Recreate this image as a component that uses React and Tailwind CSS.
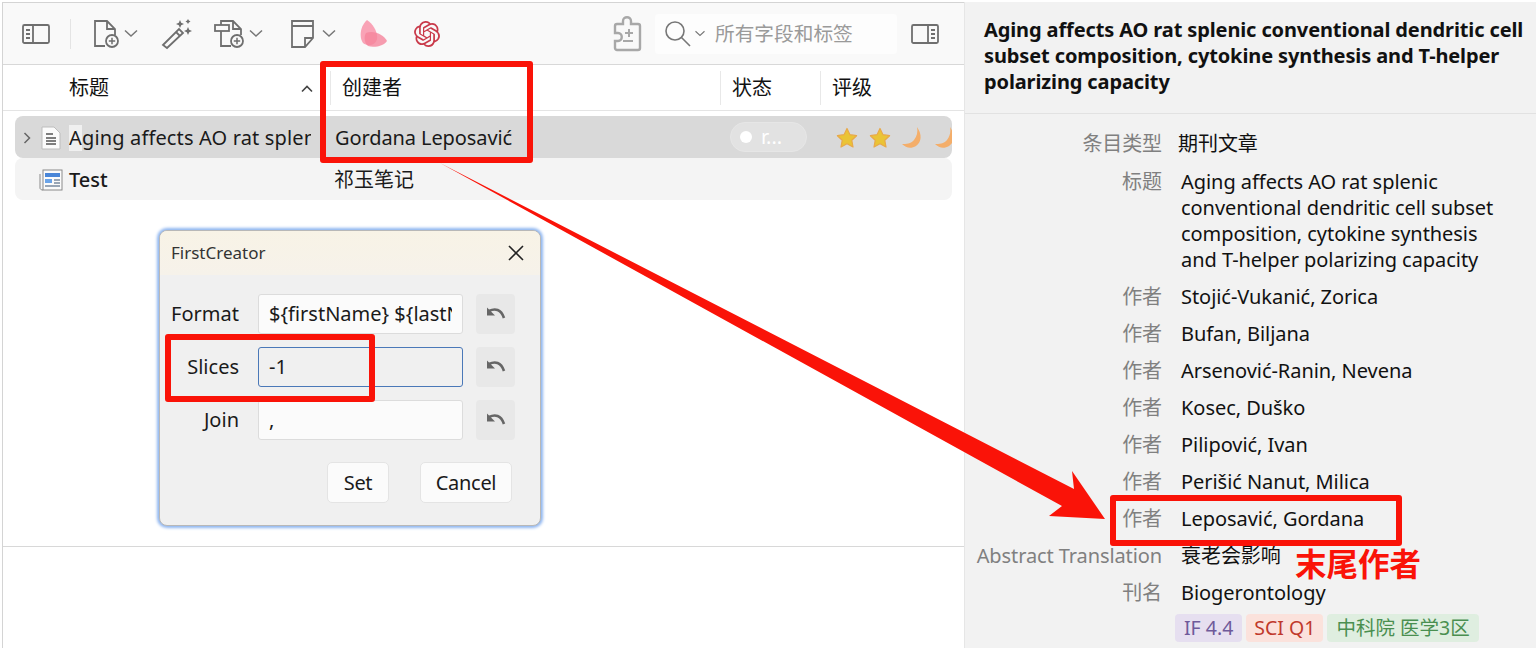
import React from "react";
import { SiOpenai } from "react-icons/si";

const FONT = "[font-family:'Noto_Sans','Noto_Sans_CJK_SC',sans-serif]";

const Chev = ({ className = "" }) => (
  <svg width="14" height="9" viewBox="0 0 14 9" className={className} fill="none" stroke="#777" strokeWidth="1.5"><path d="M1 1.5 7 7 13 1.5" /></svg>
);

const Plus = ({ cx, cy }) => (
  <g>
    <circle cx={cx} cy={cy} r="6" fill="#f9f9f9" stroke="#6f6f6f" strokeWidth="1.8" />
    <path d={`M${cx - 3.2} ${cy}h6.4M${cx} ${cy - 3.2}v6.4`} stroke="#6f6f6f" strokeWidth="1.5" />
  </g>
);

const PaneIcon = ({ flip }) => (
  <svg width="28" height="22" viewBox="0 0 28 22" fill="none" stroke="#6f6f6f" strokeWidth="1.8">
    <rect x="1" y="2" width="26" height="18" rx="1.5" />
    {flip ? (
      <path d="M17 2v18M20 7h4M20 11h4M20 15h4" />
    ) : (
      <path d="M11 2v18M4 7h4M4 11h4M4 15h4" />
    )}
  </svg>
);

const NewDoc = () => (
  <svg width="28" height="30" viewBox="0 0 28 30" fill="none" stroke="#6f6f6f" strokeWidth="1.8">
    <path d="M12 27H2V2h12l8 8v6M14 2v8h8" />
    <Plus cx="19" cy="22" />
  </svg>
);

const Wand = () => (
  <svg width="32" height="32" viewBox="0 0 32 32" fill="none">
    <path d="M2 27 18 11l4 4L6 30z" fill="#f9f9f9" stroke="#6f6f6f" strokeWidth="1.8" />
    <path d="M15 14l4 4" stroke="#6f6f6f" strokeWidth="1.8" />
    <path d="M19 2l1.2 2.8L23 6l-2.8 1.2L19 10l-1.2-2.8L15 6l2.8-1.2zM27 1l.9 1.6 1.6.9-1.6.9L27 6l-.9-1.6-1.6-.9 1.6-.9zM27 9l1.2 2.8L31 13l-2.8 1.2L27 17l-1.2-2.8L23 13l2.8-1.2z" fill="#6f6f6f" />
  </svg>
);

const NewAttach = () => (
  <svg width="32" height="30" viewBox="0 0 32 30" fill="none" stroke="#6f6f6f" strokeWidth="1.8">
    <path d="M17 27H7V2h12l8 8v6M19 2v8h8" />
    <rect x="1" y="6" width="14" height="6" fill="#f9f9f9" />
    <Plus cx="23" cy="22" />
  </svg>
);

const Note = () => (
  <svg width="24" height="28" viewBox="0 0 24 28" fill="none" stroke="#6f6f6f" strokeWidth="1.8">
    <path d="M1 1h21v17l-8 9H1zM1 6h21M22 18h-8v9" />
  </svg>
);

const Petal = () => (
  <svg width="27" height="27" viewBox="0 0 27 27">
    <path d="M7 0C13 4 18 12 17 19 16 25 8 27 3 23-1 18 0 6 7 0z" fill="#f9a3b6" />
    <path d="M6 13C14 10 24 15 27 21 24 26 14 28 8 26 4 23 4 16 6 13z" fill="#f5849c" opacity=".8" />
  </svg>
);

const Puzzle = () => (
  <svg width="30" height="36" viewBox="0 0 30 36" fill="none" stroke="#a8a8a8" strokeWidth="2.4">
    <path d="M11 8V5c0-5 8-5 8 0v3h7c1 0 2 1 2 2v22c0 1-1 2-2 2H5c-1 0-2-1-2-2v-7h3c5 0 5-8 0-8H3V10c0-1 1-2 2-2z" />
    <path d="M17 13v8M13 17h8M11 25h10" strokeWidth="2" />
  </svg>
);

const Search = () => (
  <svg width="28" height="28" viewBox="0 0 28 28" fill="none" stroke="#777" strokeWidth="1.6">
    <circle cx="11" cy="11" r="9" />
    <path d="M17.5 17.5 26 26" />
  </svg>
);

const DocIcon = () => (
  <svg width="20" height="24" viewBox="0 0 20 24">
    <path d="M1 1h12l6 6v16H1z" fill="#fbfbfb" stroke="#bdbdbd" />
    <path d="M5 8h7M5 12h10M5 15h10M5 18h10" stroke="#555" strokeWidth="1.4" />
  </svg>
);

const NewsIcon = () => (
  <svg width="24" height="22" viewBox="0 0 24 22">
    <rect x="4" y="1" width="19" height="20" fill="#fbfbfb" stroke="#8a8a8a" />
    <path d="M1 5v14c0 1 1 2 3 2" fill="none" stroke="#8a8a8a" />
    <rect x="6" y="4" width="15" height="4" fill="#4a86d8" />
    <rect x="6" y="10" width="7" height="4" fill="#6ba4e8" />
    <path d="M15 11h6M15 14h6M6 17h15" stroke="#7a8aa0" strokeWidth="1.3" />
  </svg>
);

const Star = () => (
  <svg width="22" height="22" viewBox="0 0 22 22" className="shrink-0">
    <path d="M11 1.5l3 6.2 6.6 1-4.8 4.6 1.2 6.7-6-3.2-6 3.2 1.2-6.7L1.4 8.7l6.6-1z" fill="#eac435" stroke="#e8a94a" strokeWidth="1.2" strokeLinejoin="round" />
  </svg>
);

const Moon = () => (
  <svg width="22" height="22" viewBox="0 0 22 22" className="shrink-0">
    <path d="M15 0c5 7 5 15-1 19-5 3-10 2-14-2 4 0 9 0 12-4 3-4 4-8 3-13z" fill="#f4ae6a" />
  </svg>
);

const Undo = () => (
  <svg width="22" height="16" viewBox="0 0 22 16" fill="none" stroke="#666" strokeWidth="2.6">
    <path d="M4 5c6-3 12-2 15 7" />
    <path d="M2 1.5v8h8z" fill="#666" stroke="none" />
  </svg>
);

function Row({ label, children, className = "" }) {
  return (
    <div className={`flex h-[37px] items-center ${className}`}>
      <div className="w-[199px] pr-[2px] text-right tracking-[-0.1px] text-[#808080]">{label}</div>
      <div className="pl-[17px] tracking-[-0.05px] text-[#111]">{children}</div>
    </div>
  );
}

function Field({ label, value, focus, clip }) {
  return (
    <>
      <div className="pr-[19px] text-right text-[#1a1a1a]">{label}</div>
      <div
        className={`flex h-[40px] items-center overflow-hidden rounded-[3px] border pl-[10px] pr-[10px] ${
          focus ? "border-[#4a78b8] bg-[#f0f0f0]" : "border-[#dcdcdc] bg-[#fbfbfb]"
        }`}
      >
        <span className={clip ? "overflow-hidden whitespace-nowrap" : ""}>{value}</span>
      </div>
      <div className="ml-[13px] flex h-[40px] w-[39px] items-center justify-center rounded-[4px] bg-[#e8e8e8]">
        <Undo />
      </div>
    </>
  );
}

export default function App() {
  return (
    <div className={`relative flex h-[648px] w-[1536px] overflow-hidden bg-white pl-[2px] pt-[2px] text-[20px] leading-[26px] text-[#1a1a1a] ${FONT}`}>
      {/* Left column */}
      <div className="flex w-[962px] shrink-0 flex-col border-l border-t border-[#d4d4d4]">
        <div className="flex h-[62px] shrink-0 items-center border-b border-[#d8d8d8] bg-[#f9f9f9]">
          <div className="ml-[19px]"><PaneIcon /></div>
          <div className="ml-[20px] h-[30px] w-px bg-[#e4e4e4]" />
          <div className="ml-[22px]"><NewDoc /></div>
          <Chev className="ml-[3px]" />
          <div className="ml-[23px]"><Wand /></div>
          <div className="ml-[21px]"><NewAttach /></div>
          <Chev className="ml-[3px]" />
          <div className="ml-[28px]"><Note /></div>
          <Chev className="ml-[7px]" />
          <div className="ml-[24px]"><Petal /></div>
          <div className="ml-[27px] text-[#c93a4a]"><SiOpenai size={26} /></div>
          <div className="ml-[172px]"><Puzzle /></div>
          <div className="ml-[13px] flex h-[40px] w-[242px] items-center rounded-[4px] bg-[#fdfdfd] pl-[9px]">
            <Search />
            <Chev className="ml-[1px] scale-75" />
            <span className="ml-[8px] text-[19.7px] text-[#9a9a9a]">所有字段和标签</span>
          </div>
          <div className="ml-[14px]"><PaneIcon flip /></div>
        </div>

        <div className="flex h-[46px] shrink-0 items-center border-b border-[#e4e4e4] bg-white pt-[1px] text-[#111]">
          <div className="flex w-[327px] items-center pl-[66px] pr-[16px]">
            <span className="flex-1">标题</span>
            <svg width="14" height="9" viewBox="0 0 14 9" fill="none" stroke="#444" strokeWidth="1.6"><path d="M2 7.5 7 2.5 12 7.5" /></svg>
          </div>
          <div className="h-[34px] w-px bg-[#e8e8e8]" />
          <div className="w-[389px] pl-[11px]">创建者</div>
          <div className="h-[34px] w-px bg-[#e8e8e8]" />
          <div className="w-[99px] pl-[11px]">状态</div>
          <div className="h-[34px] w-px bg-[#e8e8e8]" />
          <div className="pl-[11px]">评级</div>
        </div>

        <div className="h-[436px] shrink-0 border-b border-[#d8d8d8] px-[12px] pt-[5px]">
          <div className="flex h-[42px] w-[937px] items-center overflow-hidden rounded-[8px] bg-[#d9d9d9] pt-[1px]">
            <svg width="10" height="14" viewBox="0 0 10 14" className="ml-[7px] shrink-0" fill="none" stroke="#666" strokeWidth="1.5"><path d="M2.5 2 7.5 7 2.5 12" /></svg>
            <div className="ml-[9px] shrink-0"><DocIcon /></div>
            <div className="ml-[8px] w-[242px] shrink-0 overflow-hidden whitespace-nowrap tracking-[0.15px]"><span className="bg-[#f0f0f0]">A</span>ging affects AO rat splenic</div>
            <div className="ml-[24px] w-[395px] shrink-0 whitespace-nowrap tracking-[-0.1px]">Gordana Leposavić</div>
            <div className="mb-[1px] flex h-[30px] w-[77px] shrink-0 items-center rounded-full border border-[#e6e6e6] bg-[#e2e2e2] pl-[9px] text-white">
              <span className="h-[12px] w-[12px] rounded-full bg-white" />
              <span className="ml-[9px] leading-none">r...</span>
            </div>
            <div className="ml-[29px] flex shrink-0 items-center gap-[11px]">
              <Star /><Star /><Moon /><Moon />
            </div>
          </div>
          <div className="flex h-[42px] w-[937px] items-center rounded-[8px] bg-[#f4f4f4] pt-[1px]">
            <div className="ml-[24px]"><NewsIcon /></div>
            <div className="ml-[6px] w-[265px] font-medium">Test</div>
            <div>祁玉笔记</div>
          </div>
        </div>
      </div>

      {/* Right column */}
      <div className="flex flex-1 flex-col overflow-hidden border-l border-[#e6e6e6] bg-[#f2f2f2]">
        <div className="h-[112px] shrink-0 border-b border-[#e2e2e2] pl-[19px] pr-[4px] pt-[15px] font-bold tracking-[-0.12px] text-[#111]">
          Aging affects AO rat splenic conventional dendritic cell subset composition, cytokine synthesis and T-helper polarizing capacity
        </div>
        <div className="pt-[11px]">
          <Row label="条目类型"><span className="-ml-[3px] block">期刊文章</span></Row>
          <div className="flex pt-[7px]">
            <div className="w-[199px] pr-[2px] text-right text-[#808080]">标题</div>
            <div className="w-[335px] pl-[17px] tracking-[-0.05px] text-[#111]">Aging affects AO rat splenic conventional dendritic cell subset composition, cytokine synthesis and T-helper polarizing capacity</div>
          </div>
          <div className="pt-[5px]">
            <Row label="作者">Stojić-Vukanić, Zorica</Row>
            <Row label="作者">Bufan, Biljana</Row>
            <Row label="作者">Arsenović-Ranin, Nevena</Row>
            <Row label="作者">Kosec, Duško</Row>
            <Row label="作者">Pilipović, Ivan</Row>
            <Row label="作者">Perišić Nanut, Milica</Row>
            <Row label="作者">Leposavić, Gordana</Row>
            <Row label="Abstract Translation">衰老会影响</Row>
            <Row label="刊名">Biogerontology</Row>
          </div>
          <div className="ml-[210px] flex gap-[4px] pt-[3px] leading-[28px]">
            <span className="rounded-[4px] bg-[#e6dff0] px-[9px] text-[19.5px] text-[#6f5a9a]">IF 4.4</span>
            <span className="rounded-[4px] bg-[#fbe2dc] px-[8px] text-[19.5px] text-[#c0392b]">SCI Q1</span>
            <span className="rounded-[4px] bg-[#dfeee0] px-[9px] text-[19.5px] text-[#4a8f50]">中科院 医学3区</span>
          </div>
        </div>
      </div>

      {/* Dialog */}
      <div className="absolute left-[159px] top-[230px] w-[382px] overflow-hidden rounded-[8px] border border-[#b8b8b8] bg-[#f0f0f0] shadow-[0_0_3px_2px_#8fb6f0]">
        <div className="flex h-[44px] items-center justify-between bg-gradient-to-b from-[#f8f3e6] to-[#f6f2ea] pl-[11px] pr-[15px] text-[17px] text-[#333]">
          <span>FirstCreator</span>
          <svg width="18" height="18" viewBox="0 0 18 18" stroke="#222" strokeWidth="1.6"><path d="M2 2l14 14M16 2 2 16" /></svg>
        </div>
        <div className="grid grid-cols-[98px_205px_52px] items-center gap-y-[13px] pt-[19px]">
          <Field label="Format" value="${firstName} ${lastName}" clip />
          <Field label="Slices" value="-1" focus />
          <Field label="Join" value="," />
        </div>
        <div className="flex justify-end gap-[31px] pb-[22px] pr-[28px] pt-[22px] tracking-[-0.3px]">
          <div className="flex h-[41px] w-[62px] items-center justify-center rounded-[5px] border border-[#e4e4e4] bg-[#fbfbfb]">Set</div>
          <div className="flex h-[41px] w-[92px] items-center justify-center rounded-[5px] border border-[#e4e4e4] bg-[#fbfbfb]">Cancel</div>
        </div>
      </div>

      {/* Annotations */}
      <svg className="pointer-events-none absolute left-0 top-0" width="1536" height="648" viewBox="0 0 1536 648">
        <polygon points="440,163 1074,489 1072,471 1105,519 1049,516 1062,506" fill="#fa1308" />
      </svg>
      <div className="pointer-events-none absolute left-[320px] top-[61px] h-[102px] w-[213px] rounded-[3px] border-[6px] border-[#fa1308]" />
      <div className="pointer-events-none absolute left-[165px] top-[334px] h-[68px] w-[210px] rounded-[3px] border-[6px] border-[#fa1308]" />
      <div className="pointer-events-none absolute left-[1110px] top-[495px] h-[51px] w-[292px] rounded-[3px] border-[6px] border-[#fa1308]" />
      <div className="absolute left-[1295px] top-[544px] text-[31.5px] font-bold leading-[40px] text-[#fa1308]">末尾作者</div>
    </div>
  );
}
